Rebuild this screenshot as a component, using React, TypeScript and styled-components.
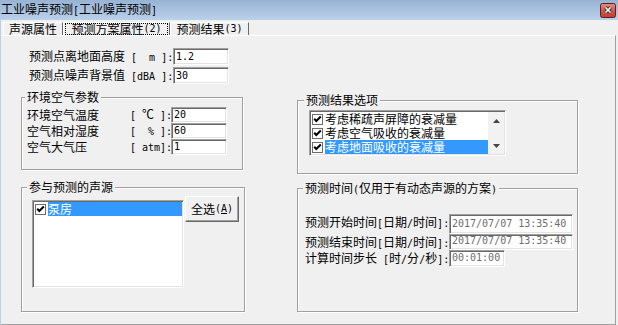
import React from 'react';
import styled, { createGlobalStyle } from 'styled-components';

const GlobalStyle = createGlobalStyle`
  html, body {
    margin: 0;
    padding: 0;
    background: #f0f0f0;
  }
  body {
    font-family: "Noto Sans CJK SC", "Noto Sans", sans-serif;
    font-size: 12px;
    line-height: 14px;
    color: #000;
  }
  * {
    box-sizing: border-box;
  }
`;

const Window = styled.div`
  width: 618px;
  height: 325px;
  display: flex;
  flex-direction: column;
  overflow: hidden;
  background: #f0f0f0;
`;

const TitleBar = styled.div`
  height: 20px;
  flex: none;
  display: flex;
  align-items: center;
  justify-content: space-between;
  padding: 0 2px 0 1px;
  background: linear-gradient(#98b3d3, #bad1ea);
`;

const Frame = styled.div`
  flex: 1;
  display: flex;
  flex-direction: column;
  border-left: 1px solid #b9d1ea;
  padding-right: 2px;
`;

const TabStrip = styled.div`
  height: 15px;
  flex: none;
  display: flex;
  align-items: flex-end;
  padding-left: 2px;
`;

const Tab = styled.div<{ $w: number }>`
  width: ${(p) => p.$w}px;
  height: 13px;
  display: flex;
  align-items: center;
  justify-content: center;
  border-top: 1px solid #fff;
  border-left: 1px solid #fff;
  border-right: 1px solid #696969;
  line-height: 12px;
  white-space: nowrap;
`;

const FocusBox = styled.span`
  flex: 1;
  height: 12px;
  margin: 0 1px;
  display: flex;
  align-items: center;
  justify-content: center;
  border: 1px dotted #000;
`;

const Panel = styled.div`
  flex: 1;
  display: grid;
  grid-template-columns: 224px 281px;
  column-gap: 52px;
  align-items: start;
  padding: 12px 0 0 20px;
  border-top: 1px solid #fff;
  border-right: 1px solid #a0a0a0;
  border-bottom: 1px solid #a0a0a0;
`;

const Column = styled.div`
  display: flex;
  flex-direction: column;
`;

const TopRow = styled.div<{ $mt?: number }>`
  height: 17px;
  display: flex;
  align-items: center;
  padding-left: 8px;
  margin-top: ${(p) => p.$mt || 0}px;
`;

const Label = styled.span<{ $w: number }>`
  width: ${(p) => p.$w}px;
  flex: none;
  white-space: nowrap;
`;

const Mono = styled.span`
  font-family: "DejaVu Sans Mono", "Liberation Mono", monospace;
  font-size: 10px;
  white-space: pre;
`;

const Edit = styled.div<{ $w: number; $h: number; $top?: number; $disabled?: boolean }>`
  width: ${(p) => p.$w}px;
  height: ${(p) => p.$h}px;
  flex: none;
  display: flex;
  align-items: ${(p) => (p.$top === undefined ? 'center' : 'flex-start')};
  padding: ${(p) => p.$top || 0}px 0 0 2px;
  background: #fff;
  border: 1px solid;
  border-color: #a0a0a0 #fff #fff #a0a0a0;
  box-shadow: inset 1px 1px 0 #696969, inset -1px -1px 0 #e3e3e3;
  font-family: "DejaVu Sans Mono", "Liberation Mono", monospace;
  font-size: 10px;
  line-height: 12px;
  color: ${(p) => (p.$disabled ? '#6d6d6d' : '#000')};
  white-space: pre;
`;

const Group = styled.div<{ $w: number; $h: number; $mt: number; $pad: string }>`
  position: relative;
  width: ${(p) => p.$w}px;
  height: ${(p) => p.$h}px;
  margin-top: ${(p) => p.$mt}px;
  padding: ${(p) => p.$pad};
  border: 1px solid #a0a0a0;
  box-shadow: 1px 1px 0 #fff, inset 1px 1px 0 #fff;
`;

const GroupTitle = styled.span<{ $left: number }>`
  position: absolute;
  top: -7px;
  left: ${(p) => p.$left}px;
  padding: 0 2px;
  background: #f0f0f0;
  line-height: 12px;
  white-space: nowrap;
`;

const ParamRow = styled.div`
  height: 16px;
  display: flex;
  align-items: center;
`;

const TimeRow = styled.div`
  display: flex;
  align-items: flex-start;
`;

const TimeLabel = styled.span`
  width: 144px;
  flex: none;
  margin-top: 1px;
  line-height: 13px;
  white-space: nowrap;
`;

const ListBox = styled.div<{ $w: number; $h: number }>`
  width: ${(p) => p.$w}px;
  height: ${(p) => p.$h}px;
  flex: none;
  display: flex;
  padding: 1px;
  background: #fff;
  border: 1px solid;
  border-color: #a0a0a0 #fff #fff #a0a0a0;
  box-shadow: inset 1px 1px 0 #696969, inset -1px -1px 0 #e3e3e3;
`;

const Items = styled.div`
  flex: 1;
  display: flex;
  flex-direction: column;
`;

const Item = styled.div`
  height: 14px;
  display: flex;
  align-items: center;
  gap: 2px;
  padding-left: 1px;
`;

const ItemText = styled.span<{ $selected: boolean }>`
  flex: 1;
  height: 14px;
  line-height: 14px;
  white-space: nowrap;
  background: ${(p) => (p.$selected ? '#3399ff' : 'transparent')};
  color: ${(p) => (p.$selected ? '#fff' : '#000')};
`;

const ScrollBar = styled.div`
  width: 16px;
  display: flex;
  flex-direction: column;
  justify-content: space-between;
  background: #f2f2f2;
`;

const ScrollArrow = styled.div`
  height: 17px;
  display: flex;
  align-items: center;
  justify-content: center;
`;

const SourcesRow = styled.div`
  display: flex;
  align-items: flex-start;
`;

const Button = styled.button`
  width: 54px;
  height: 26px;
  margin: -4px 0 0 1px;
  padding: 0;
  display: flex;
  align-items: center;
  justify-content: center;
  font: inherit;
  color: #000;
  background: #f0f0f0;
  border: 1px solid;
  border-color: #fff #696969 #696969 #fff;
  box-shadow: inset -1px -1px 0 #a0a0a0;
`;

const Txt: React.FC<{ s: string }> = ({ s }) => (
  <>
    {s
      .split(/([\x20-\x7e]+)/)
      .filter(Boolean)
      .map((part, i) =>
        /^[\x20-\x7e]+$/.test(part) ? (
          <Mono key={i}>{part}</Mono>
        ) : (
          <React.Fragment key={i}>{part}</React.Fragment>
        ),
      )}
  </>
);

const CloseIcon = () => (
  <svg width="16" height="15" viewBox="0 0 16 15">
    <defs>
      <linearGradient id="closeBg" x1="0" y1="0" x2="0" y2="1">
        <stop offset="0" stopColor="#e39283" />
        <stop offset="0.5" stopColor="#cf5a49" />
        <stop offset="1" stopColor="#c0402f" />
      </linearGradient>
    </defs>
    <rect x="0.5" y="0.5" width="15" height="14" rx="2" fill="url(#closeBg)" stroke="#5a1f28" />
    <path d="M5.5 4.5 L10.5 9.5 M10.5 4.5 L5.5 9.5" stroke="#3a2a2a" strokeWidth="3.4" />
    <path d="M5.5 4.5 L10.5 9.5 M10.5 4.5 L5.5 9.5" stroke="#fff" strokeWidth="1.6" />
  </svg>
);

const CheckBox = () => (
  <svg width="11" height="11" viewBox="0 0 11 11" style={{ flex: 'none' }}>
    <rect x="0.5" y="0.5" width="10" height="10" fill="#fff" stroke="#6d6d6d" />
    <path d="M2.2 4.8 L4.3 7 L8.8 2.5" fill="none" stroke="#000" strokeWidth="2" />
  </svg>
);

const Arrow = ({ up }: { up: boolean }) => (
  <svg width="7" height="4" viewBox="0 0 7 4">
    <polygon points={up ? '3.5,0 7,4 0,4' : '0,0 7,0 3.5,4'} fill="#444" />
  </svg>
);

const envParams = [
  { label: '环境空气温度', unit: '[ ℃ ]:', value: '20' },
  { label: '空气相对湿度', unit: '[  % ]:', value: '60' },
  { label: '空气大气压', unit: '[ atm]:', value: '1' },
];

const resultOptions = [
  { label: '考虑稀疏声屏障的衰减量', selected: false },
  { label: '考虑空气吸收的衰减量', selected: false },
  { label: '考虑地面吸收的衰减量', selected: true },
];

const timeRows = [
  { label: '预测开始时间[日期/时间]:', value: '2017/07/07 13:35:40', w: 124, h: 20, top: 3 },
  { label: '预测结束时间[日期/时间]:', value: '2017/07/07 13:35:40', w: 124, h: 16, top: 0 },
  { label: '计算时间步长 [时/分/秒]:', value: '00:01:00', w: 56, h: 17, top: 1 },
];

export default function App() {
  return (
    <>
      <GlobalStyle />
      <Window>
        <TitleBar>
          <span>
            <Txt s="工业噪声预测[工业噪声预测]" />
          </span>
          <CloseIcon />
        </TitleBar>
        <Frame>
          <TabStrip>
            <Tab $w={60}>声源属性</Tab>
            <Tab $w={107}>
              <FocusBox>
                <Txt s="预测方案属性(2)" />
              </FocusBox>
            </Tab>
            <Tab $w={79}>
              <Txt s="预测结果(3)" />
            </Tab>
          </TabStrip>
          <Panel>
            <Column>
              <TopRow>
                <Label $w={144}>
                  <Txt s="预测点离地面高度 [  m ]:" />
                </Label>
                <Edit $w={56} $h={17}>1.2</Edit>
              </TopRow>
              <TopRow $mt={2}>
                <Label $w={144}>
                  <Txt s="预测点噪声背景值 [dBA ]:" />
                </Label>
                <Edit $w={56} $h={17}>30</Edit>
              </TopRow>

              <Group $w={222} $h={73} $mt={13} $pad="9px 0 0 5px">
                <GroupTitle $left={3}>环境空气参数</GroupTitle>
                {envParams.map((p) => (
                  <ParamRow key={p.label}>
                    <Label $w={103}>{p.label}</Label>
                    <Label $w={41}>
                      <Txt s={p.unit} />
                    </Label>
                    <Edit $w={56} $h={16}>{p.value}</Edit>
                  </ParamRow>
                ))}
              </Group>

              <Group $w={224} $h={125} $mt={17} $pad="12px 0 0 10px">
                <GroupTitle $left={5}>参与预测的声源</GroupTitle>
                <SourcesRow>
                  <ListBox $w={152} $h={88}>
                    <Items>
                      <Item>
                        <CheckBox />
                        <ItemText $selected>泵房</ItemText>
                      </Item>
                    </Items>
                  </ListBox>
                  <Button>
                    全选
                    <Mono>
                      (<u>A</u>)
                    </Mono>
                  </Button>
                </SourcesRow>
              </Group>
            </Column>

            <Column>
              <Group $w={281} $h={74} $mt={52} $pad="9px 0 0 11px">
                <GroupTitle $left={6}>预测结果选项</GroupTitle>
                <ListBox $w={197} $h={46}>
                  <Items>
                    {resultOptions.map((o) => (
                      <Item key={o.label}>
                        <CheckBox />
                        <ItemText $selected={o.selected}>{o.label}</ItemText>
                      </Item>
                    ))}
                  </Items>
                  <ScrollBar>
                    <ScrollArrow>
                      <Arrow up />
                    </ScrollArrow>
                    <ScrollArrow>
                      <Arrow up={false} />
                    </ScrollArrow>
                  </ScrollBar>
                </ListBox>
              </Group>

              <Group $w={281} $h={124} $mt={14} $pad="25px 0 0 7px">
                <GroupTitle $left={5}>
                  <Txt s="预测时间(仅用于有动态声源的方案)" />
                </GroupTitle>
                {timeRows.map((r) => (
                  <TimeRow key={r.label}>
                    <TimeLabel>
                      <Txt s={r.label} />
                    </TimeLabel>
                    <Edit $w={r.w} $h={r.h} $top={r.top} $disabled>
                      {r.value}
                    </Edit>
                  </TimeRow>
                ))}
              </Group>
            </Column>
          </Panel>
        </Frame>
      </Window>
    </>
  );
}
